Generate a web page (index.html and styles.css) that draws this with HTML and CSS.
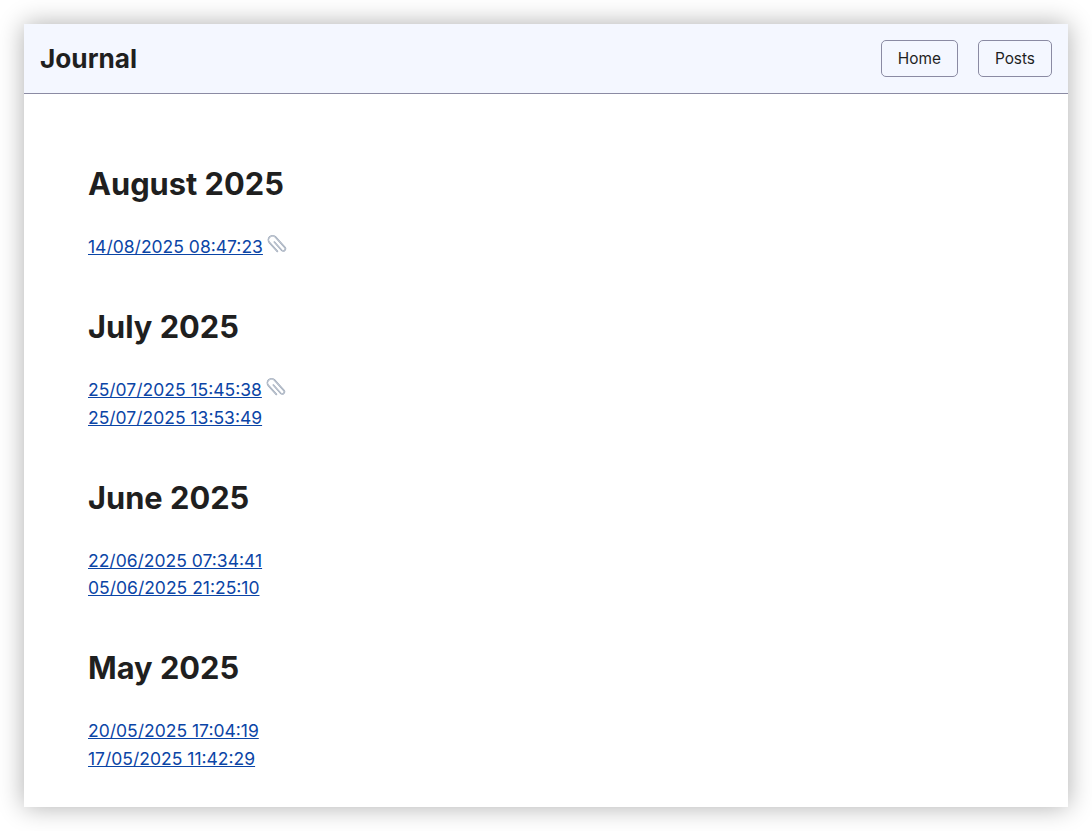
FILE: index.html
```html
<!DOCTYPE html>
<html lang="en">
<head>
<meta charset="utf-8">
<title>Journal</title>
<link rel="stylesheet" href="styles.css">
</head>
<body>
<div class="window">
  <header class="topbar">
    <h1 class="brand">Journal</h1>
    <nav class="nav">
      <a class="btn" href="#">Home</a>
      <a class="btn" href="#">Posts</a>
    </nav>
  </header>
  <main class="content">
    <section class="month">
      <h2>August 2025</h2>
      <ul>
        <li><a href="#">14/08/2025 08:47:23</a><svg class="clip" viewBox="0 0 20 20"><use href="#clip-icon"/></svg></li>
      </ul>
    </section>
    <section class="month">
      <h2>July 2025</h2>
      <ul>
        <li><a href="#">25/07/2025 15:45:38</a><svg class="clip" viewBox="0 0 20 20"><use href="#clip-icon"/></svg></li>
        <li><a href="#">25/07/2025 13:53:49</a></li>
      </ul>
    </section>
    <section class="month">
      <h2>June 2025</h2>
      <ul>
        <li><a href="#">22/06/2025 07:34:41</a></li>
        <li><a href="#">05/06/2025 21:25:10</a></li>
      </ul>
    </section>
    <section class="month">
      <h2>May 2025</h2>
      <ul>
        <li><a href="#">20/05/2025 17:04:19</a></li>
        <li><a href="#">17/05/2025 11:42:29</a></li>
      </ul>
    </section>
  </main>
</div>
<svg class="defs" width="0" height="0">
  <symbol id="clip-icon" viewBox="0 0 20 20">
    <g transform="rotate(-42 10 10)">
      <path d="M10 6 V17 a2.1 2.1 0 0 0 4.2 0 V3.2 a4.1 4.1 0 0 0 -8.2 0 V15" fill="none" stroke="#98a3b4" stroke-width="1.6" stroke-linecap="round"/>
      <path d="M10 6 V17 a2.1 2.1 0 0 0 4.2 0 V3.2 a4.1 4.1 0 0 0 -8.2 0 V15" fill="none" stroke="#dfe4ea" stroke-width="0.5" stroke-linecap="round"/>
    </g>
  </symbol>
</svg>
</body>
</html>
```
FILE: styles.css
```css
* { box-sizing: border-box; }
html, body { margin: 0; background: #fff; }
body {
  padding: 24px;
  font-family: Inter, "Liberation Sans", sans-serif;
  color: #1f1f1f;
}
.window {
  background: #fff;
  height: 783px;
  overflow: hidden;
  box-shadow: 0 0 24px rgba(0, 0, 0, 0.32);
}
.topbar {
  display: flex;
  align-items: center;
  justify-content: space-between;
  height: 70px;
  padding: 0 16px;
  background: #f4f7ff;
  border-bottom: 1px solid #8b8ba3;
}
.brand {
  margin: 0;
  font-size: 26.2px;
  font-weight: 700;
  color: #1f1f1f;
}
.nav { display: flex; gap: 20px; }
.btn {
  display: block;
  height: 37px;
  padding: 0 16px;
  line-height: 36px;
  font-size: 15.4px;
  color: #1f1f1f;
  text-decoration: none;
  border: 1px solid #8b8ba3;
  border-radius: 5px;
}
.content { padding: 65px 64px 0; }
.month { margin-bottom: 41.5px; }
h2 {
  margin: 0 0 24px;
  font-size: 30.8px;
  line-height: 50px;
  font-weight: 700;
  height: 50px;
  color: #1f1f1f;
}
ul { margin: 0; padding: 0; list-style: none; }
li {
  display: flex;
  align-items: center;
  height: 27.5px;
  font-size: 17.5px;
}
a { color: #0b45a6; }
.clip { width: 20px; height: 20px; margin: -4px 0 0 4px; }
.defs { position: absolute; }
```
